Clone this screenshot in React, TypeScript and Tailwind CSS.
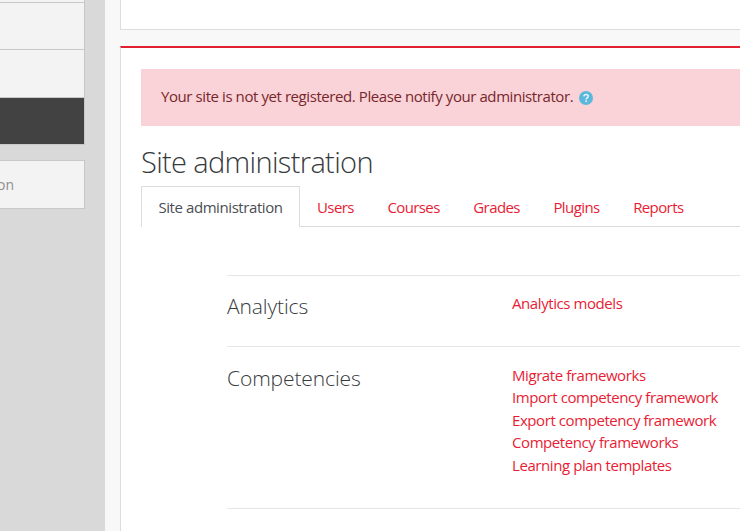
const font = "font-['Open_Sans','Noto_Sans',sans-serif]";

const sections = [
  { title: "Analytics", links: ["Analytics models"], box: "h-[71px]", head: "pt-[15px]", list: "pt-[16px]" },
  {
    title: "Competencies",
    links: [
      "Migrate frameworks",
      "Import competency framework",
      "Export competency framework",
      "Competency frameworks",
      "Learning plan templates",
    ],
    box: "h-[162px]",
    head: "pt-[16px]",
    list: "pt-[16.5px]",
  },
  { title: "Badges", links: [], box: "h-[40px]", head: "pt-[14px]", list: "pt-[16px]" },
];

const tabs = ["Users", "Courses", "Grades", "Plugins", "Reports"];

function Sidebar() {
  return (
    <div className="w-[105px] shrink-0 bg-[#d9d9d9] overflow-hidden">
      <div className="w-[85px]">
        <div className="h-[3px] bg-[#f3f3f3] border-b border-r border-[#c8c8c8]" />
        <div className="h-[47px] bg-[#f3f3f3] border-b border-r border-[#c8c8c8]" />
        <div className="h-[48px] bg-[#f3f3f3] border-b border-r border-[#c8c8c8]" />
        <div className="h-[47px] bg-[#424242] border-r border-b border-[#c8c8c8]" />
        <div className="mt-[15px] h-[49px] bg-[#f3f3f3] border-y border-r border-[#c8c8c8] flex items-center justify-end pr-[70px]">
          <span className="text-[14px] text-[#8f8f8f] whitespace-nowrap">on</span>
        </div>
      </div>
    </div>
  );
}

function HelpIcon() {
  return (
    <svg width="14" height="14" viewBox="0 0 14 14" className="ml-[6px] mt-[3px] shrink-0">
      <circle cx="7" cy="7" r="7" fill="#5bb8dd" />
      <path d="M4.9 5.4C5 4.2 5.9 3.5 7.1 3.5c1.2 0 2.1.8 2.1 1.8 0 1.7-2 1.6-2 3.1" fill="none" stroke="#e4f2f8" strokeWidth="1.6" />
      <rect x="6.3" y="9.4" width="1.7" height="1.6" fill="#e4f2f8" />
    </svg>
  );
}

export default function App() {
  return (
    <div className={`${font} flex w-[740px] h-[531px] overflow-hidden bg-[#f8f8f8]`}>
      <Sidebar />
      <div className="flex-1 pl-[15px] min-w-0">
        <div className="h-[30px] bg-white border-l border-b border-[#dcdcdc]" />
        <div className="mt-[16px] h-[485px] bg-white border-l border-[#dcdcdc] border-t-2 border-t-[#e0202f] pl-5 pt-[21px] overflow-hidden">
          <div className="w-[640px] h-[57px] bg-[#f9d3d7] flex items-center pl-5 pb-[2px] text-[15px] tracking-[-0.42px] text-[#78262c]">
            <span>Your site is not yet registered. Please notify your administrator.</span>
            <HelpIcon />
          </div>
          <h1 className="mt-[16px] h-[44px] font-light text-[29px] leading-[40px] tracking-[-0.65px] text-[#373a3c]">
            Site administration
          </h1>
          <div className="h-[41px] w-[640px] border-b border-[#dcdce0] flex text-[15px] tracking-[-0.42px]">
            <div className="h-[41px] w-[159px] pt-px border border-b-0 border-[#dcdce0] bg-white flex items-center justify-center text-[#4a4e52]">
              Site administration
            </div>
            <div className="flex items-center pt-[2px] pl-[17px] gap-[33.6px] tracking-[-0.6px] text-[#e81c34]">
              {tabs.map((tab) => (
                <a key={tab}>{tab}</a>
              ))}
            </div>
          </div>
          <div className="mt-[48px] ml-[86px] w-[560px]">
            {sections.map((section) => (
              <div key={section.title} className={`${section.box} border-t border-[#e6e6e6] flex`}>
                <h3 className={`${section.head} w-[285px] font-light text-[21px] leading-[30px] tracking-[-0.1px] text-[#373a3c]`}>
                  {section.title}
                </h3>
                <div className={`${section.list} flex flex-col text-[15px] leading-[22.5px] tracking-[-0.42px] text-[#e81c34]`}>
                  {section.links.map((link) => (
                    <a key={link}>{link}</a>
                  ))}
                </div>
              </div>
            ))}
          </div>
        </div>
      </div>
    </div>
  );
}
